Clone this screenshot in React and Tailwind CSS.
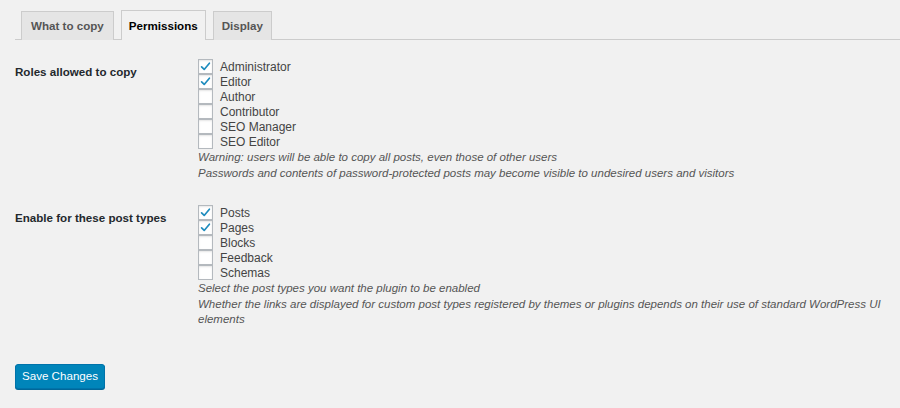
import React from "react";

const font = { fontFamily: '"Liberation Sans", Arial, sans-serif' };

const Check = ({ checked }) => (
  <span className="w-[15px] h-[15px] shrink-0 bg-white border border-[#b4b9be] shadow-[inset_0_1px_2px_rgba(0,0,0,0.1)] flex items-center justify-center mr-[7px]">
    {checked && (
      <svg width="13" height="13" viewBox="0 0 20 20">
        <path d="M4 10.5 L8 14.5 L16 5" fill="none" stroke="#1e8cbe" strokeWidth="2.6" strokeLinecap="round" strokeLinejoin="round" />
      </svg>
    )}
  </span>
);

const Row = ({ title, items, notes }) => (
  <div className="flex">
    <div className="w-[183px] shrink-0 pt-[5px] text-[11.6px] leading-[15px] font-bold text-[#23282d]">{title}</div>
    <div className="flex flex-col">
      {items.map(([label, on]) => (
        <label key={label} className="flex items-center h-[15px] text-[12px] text-[#444]">
          <Check checked={on} />
          {label}
        </label>
      ))}
      <div className="mt-[1px] max-w-[690px] text-[11.5px] italic text-[#555] leading-[15.5px]">
        {notes.map((n) => (
          <p key={n}>{n}</p>
        ))}
      </div>
    </div>
  </div>
);

export default function App() {
  return (
    <div className="w-[900px] h-[408px] bg-[#f1f1f1] overflow-hidden" style={font}>
      <div className="pt-[11px] pl-[15px]">
        <div className="flex border-b border-[#ccc] pl-[6px] gap-[7px]">
          <div className="h-[29px] px-[9px] flex items-center bg-[#e5e5e5] border border-b-0 border-[#ccc] text-[11.6px] font-bold text-[#555] -mb-px">
            What to copy
          </div>
          <div className="h-[30px] px-[7px] flex items-center bg-[#f1f1f1] border border-b-0 border-[#ccc] text-[11.6px] font-bold text-black -mt-px -mb-px">
            Permissions
          </div>
          <div className="h-[29px] px-[8px] flex items-center bg-[#e5e5e5] border border-b-0 border-[#ccc] text-[11.6px] font-bold text-[#555] -mb-px">
            Display
          </div>
        </div>
      </div>

      <div className="pl-[15px] pt-[19px]">
        <Row
          title="Roles allowed to copy"
          items={[
            ["Administrator", true],
            ["Editor", true],
            ["Author", false],
            ["Contributor", false],
            ["SEO Manager", false],
            ["SEO Editor", false],
          ]}
          notes={[
            "Warning: users will be able to copy all posts, even those of other users",
            "Passwords and contents of password-protected posts may become visible to undesired users and visitors",
          ]}
        />
        <div className="h-[24px]" />
        <Row
          title="Enable for these post types"
          items={[
            ["Posts", true],
            ["Pages", true],
            ["Blocks", false],
            ["Feedback", false],
            ["Schemas", false],
          ]}
          notes={[
            "Select the post types you want the plugin to be enabled",
            "Whether the links are displayed for custom post types registered by themes or plugins depends on their use of standard WordPress UI elements",
          ]}
        />
        <button className="mt-[36px] w-[90px] h-[25px] rounded-[3px] bg-[#0085ba] border border-[#0073aa] shadow-[0_1px_0_#006799] text-white text-[11.6px]">
          Save Changes
        </button>
      </div>
    </div>
  );
}
